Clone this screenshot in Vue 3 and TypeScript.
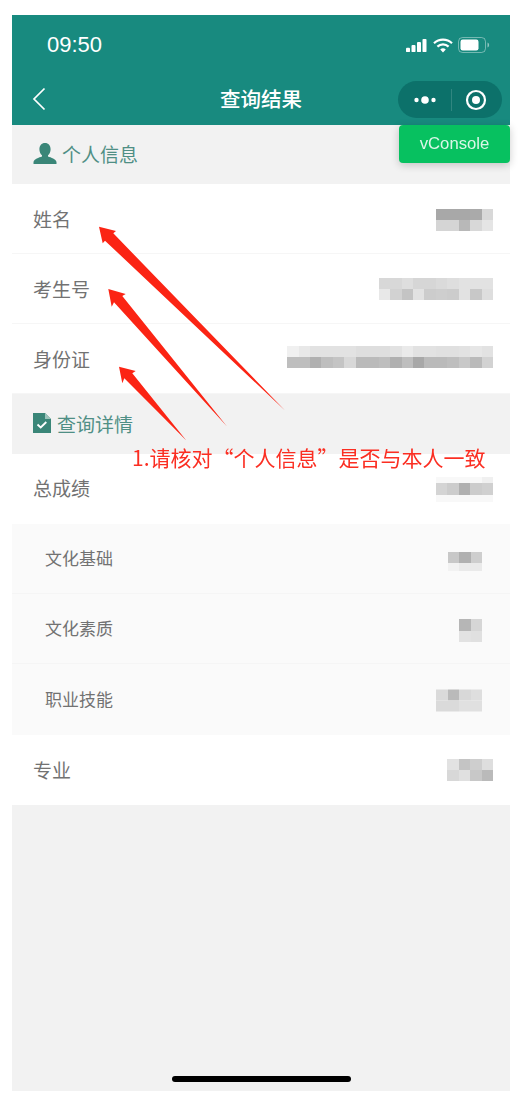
<script setup lang="ts">
interface Row { label: string; cells: number[][]; shift: number; inset: number; heights?: number[] }
const g = (...v: number[]) => v
const person: Row[] = [
  { label: '姓名', inset: 17, shift: 2, cells: [g(168, 168, 168, 170, 216), g(213, 213, 184, 216, 229)] },
  { label: '考生号', inset: 17, shift: 1, cells: [g(216, 216, 222, 214, 214, 218, 222, 226, 226, 226), g(232, 210, 196, 226, 204, 206, 204, 226, 200, 222)] },
  { label: '身份证', inset: 17, shift: -1, cells: [g(240, 232, 226, 226, 226, 226, 222, 222, 222, 226, 234, 226, 226, 224, 224, 226, 230, 226), g(190, 190, 176, 190, 196, 216, 186, 186, 190, 176, 190, 168, 186, 186, 190, 200, 186, 210)] },
]
const total: Row = { label: '总成绩', inset: 17, shift: 2, heights: [6, 12, 7], cells: [g(248, 248, 248, 248, 240), g(212, 204, 176, 204, 208), g(248, 248, 248, 248, 248)] }
const subs: Row[] = [
  { label: '文化基础', inset: 28, shift: 4, heights: [11.4, 7.5], cells: [g(200, 176, 206), g(242, 234, 234)] },
  { label: '文化素质', inset: 28, shift: 3, cells: [g(182, 214), g(226, 224)] },
  { label: '职业技能', inset: 28, shift: 2.5, cells: [g(218, 186, 216, 222), g(218, 218, 224, 224)] },
]
const major: Row = { label: '专业', inset: 17, shift: 1, cells: [g(226, 196, 206, 222), g(216, 224, 200, 186)] }
const grey = (v: number) => ({ backgroundColor: `rgb(${v},${v},${v})` })
const place = (r: Row) => ({ marginRight: r.inset + 'px', transform: `translateY(${r.shift}px)` })
const rowHeight = (r: Row, i: number) => (r.heights ? { height: r.heights[i] + 'px' } : {})
</script>

<template>
  <div class="frame">
    <header class="top">
      <div class="status">
        <span class="time">09:50</span>
        <div class="status-icons">
          <svg width="22" height="13" viewBox="0 0 22 15" preserveAspectRatio="none"><rect x="0" y="10" width="4" height="5" rx="1" /><rect x="5.5" y="7" width="4" height="8" rx="1" /><rect x="11" y="3.5" width="4" height="11.5" rx="1" /><rect x="16.5" y="0" width="4" height="15" rx="1" /></svg>
          <svg width="20" height="15" viewBox="0 0 20 15"><path d="M1 5.2a13 13 0 0 1 18 0" fill="none" stroke="#fff" stroke-width="2.2" /><path d="M4.4 8.6a8.2 8.2 0 0 1 11.2 0" fill="none" stroke="#fff" stroke-width="2.2" /><path d="M7.2 11.5 10 14.5l2.8-3a4 4 0 0 0-5.6 0z" /></svg>
          <svg width="32" height="16" viewBox="0 0 32 16"><rect x=".5" y=".5" width="27" height="15" rx="4" fill="none" stroke="#fff" stroke-opacity=".4" /><rect x="2.5" y="2.500" width="18" height="11" rx="2.200" /><path d="M29.500 5.500c1.200.4 1.600 1.400 1.600 2.500s-.4 2.100-1.600 2.500z" opacity=".5" /></svg>
        </div>
      </div>
      <nav class="nav">
        <svg class="back" width="14" height="24" viewBox="0 0 14 24"><path d="M12.500 1.500 2 12l10.500 10.500" fill="none" stroke="#fff" stroke-width="1.700" /></svg>
        <h1 class="title">查询结果</h1>
        <div class="capsule">
          <svg width="24" height="10" viewBox="0 0 24 10"><circle cx="3.500" cy="5" r="2.200" /><circle cx="12" cy="5" r="3.800" /><circle cx="20.500" cy="5" r="2.200" /></svg>
          <i class="divider"></i>
          <svg width="22" height="22" viewBox="0 0 22 22"><circle cx="11" cy="11" r="9" fill="none" stroke="#fff" stroke-width="2.200" /><circle cx="11" cy="11" r="4" /></svg>
        </div>
      </nav>
    </header>

    <section class="heading heading-person">
      <svg width="24" height="21" viewBox="0 0 24 21"><path d="M12 0c3.500 0 5.600 2.700 5.600 6.200 0 2.600-1 4.700-2.600 6v1.400c3 1.100 8 2.300 8.500 5.500V21H.5v-1.900c.5-3.200 5.500-4.400 8.500-5.500v-1.400c-1.600-1.300-2.600-3.400-2.600-6C6.400 2.700 8.500 0 12 0z" fill="#3a8678" /></svg>
      <span>个人信息</span>
    </section>
    <div v-for="r in person" :key="r.label" class="row line">
      <span>{{ r.label }}</span>
      <div class="mosaic" :style="place(r)">
        <div v-for="(cols, i) in r.cells" :key="i" class="mrow" :style="rowHeight(r, i)">
          <i v-for="(c, j) in cols" :key="j" class="cell" :style="grey(c)"></i>
        </div>
      </div>
    </div>

    <section class="heading heading-detail">
      <svg width="18" height="20" viewBox="0 0 18 20"><path d="M0 0h12l6 6v14H0z" fill="#3a8678" /><path d="M12 0v6h6z" fill="#9cc4bb" /><path d="m4.500 11.500 3.200 3 5.600-5.500" fill="none" stroke="#fff" stroke-width="1.800" /></svg>
      <span>查询详情</span>
    </section>
    <div class="row total">
      <span>{{ total.label }}</span>
      <div class="mosaic" :style="place(total)">
        <div v-for="(cols, i) in total.cells" :key="i" class="mrow" :style="rowHeight(total, i)">
          <i v-for="(c, j) in cols" :key="j" class="cell" :style="grey(c)"></i>
        </div>
      </div>
    </div>
    <div class="subs">
      <div v-for="r in subs" :key="r.label" class="row sub">
        <span>{{ r.label }}</span>
        <div class="mosaic" :style="place(r)">
          <div v-for="(cols, i) in r.cells" :key="i" class="mrow" :style="rowHeight(r, i)">
            <i v-for="(c, j) in cols" :key="j" class="cell" :style="grey(c)"></i>
          </div>
        </div>
      </div>
    </div>
    <div class="row major">
      <span>{{ major.label }}</span>
      <div class="mosaic" :style="place(major)">
        <div v-for="(cols, i) in major.cells" :key="i" class="mrow" :style="rowHeight(major, i)">
          <i v-for="(c, j) in cols" :key="j" class="cell" :style="grey(c)"></i>
        </div>
      </div>
    </div>
    <div class="rest"></div>

    <div class="vconsole">vConsole</div>
    <i class="home"></i>
  </div>

  <svg class="arrows" width="527" height="1107" viewBox="0 0 527 1107">
    <path d="M99 226.700 116 231 113.300 233.300 285 410.500 105 240.700 102.700 243.300z" />
    <path d="M108.300 289 125.700 294 122.300 296 227 426.500 114 302.300 111.700 306.700z" />
    <path d="M119 366.700 135.700 371 132.300 373.300 186.300 440.500 124.300 378.300 122.300 383.300z" />
  </svg>
  <p class="note">1.请核对“个人信息”是否与本人一致</p>
</template>

<style scoped>
.frame {
  position: relative;
  box-sizing: border-box;
  width: 498px;
  height: 1076px;
  margin: 15px 0 16px 12px;
  display: flex;
  flex-direction: column;
  background: #f2f2f2;
  font-family: "Noto Sans CJK SC", "Noto Sans", sans-serif;
  color: #666;
  filter: blur(0.55px);
}
.top { height: 110px; flex: none; background: #188a7f; color: #fff; fill: #fff; }
.status {
  height: 62px;
  padding: 0 20px 2px 35px;
  box-sizing: border-box;
  display: flex;
  align-items: center;
  justify-content: space-between;
}
.time { font: 400 22px "Liberation Sans", sans-serif; }
.status-icons { display: flex; align-items: center; gap: 5px; }
.nav { position: relative; height: 48px; display: flex; align-items: center; justify-content: center; padding-bottom: 6px; box-sizing: border-box; }
.back { position: absolute; left: 20px; top: 10px; }
.title { margin: 0; font-size: 20.500px; font-weight: 500; line-height: 1; }
.capsule {
  position: absolute;
  left: 386px;
  top: 4px;
  box-sizing: border-box;
  width: 104px;
  height: 37px;
  border-radius: 19px;
  background: #0c716a;
  display: flex;
  align-items: center;
  padding: 0 15px 0 15px;
  justify-content: space-between;
}
.divider { width: 1px; height: 22px; background: rgba(255, 255, 255, 0.15); }
.heading {
  flex: none;
  box-sizing: border-box;
  display: flex;
  align-items: center;
  color: #4f8f85;
  font-size: 19px;
}
.heading-person { height: 59px; padding: 0 0 2px 21px; gap: 5px; }
.heading-detail { height: 60px; padding: 0 0 2px 21px; gap: 6px; }
.row {
  height: 70px;
  flex: none;
  box-sizing: border-box;
  background: #fff;
  display: flex;
  align-items: center;
  justify-content: space-between;
  padding-left: 21px;
  font-size: 19px;
  color: #727272;
}
.line { padding-bottom: 1px; border-bottom: 1px solid #f6f6f6; }
.line:nth-of-type(4) { border-bottom: 0; padding-bottom: 0; }
.total { padding-bottom: 4px; }
.major { padding-bottom: 2px; }
.subs { background: #fafafa; flex: none; padding-bottom: 1px; }
.sub { height: 70px; background: transparent; padding: 0 0 2px 33px; font-size: 17px; border-bottom: 1px solid #f5f5f5; }
.sub:last-child { border-bottom: 0; }
.mosaic { display: flex; flex-direction: column; }
.mrow { display: flex; justify-content: flex-end; }
.cell { display: block; width: 11.450px; height: 100%; min-height: 5px; }
.mrow:not([style*="height"]) { height: 11.400px; }
.rest { flex: 1; }
.vconsole {
  position: absolute;
  right: 0;
  top: 110px;
  width: 111px;
  height: 38px;
  background: #07c160;
  border-radius: 4px;
  box-shadow: 0 2px 8px rgba(0, 0, 0, 0.2);
  color: rgba(255, 255, 255, 0.85);
  font: 400 16.700px/38px "Liberation Sans", sans-serif;
  text-align: center;
}
.home {
  position: absolute;
  left: 160px;
  bottom: 9px;
  width: 179px;
  height: 6px;
  border-radius: 3px;
  background: #000;
}
.arrows { position: absolute; left: 0; top: 0; fill: #fb2414; pointer-events: none; }
.note {
  position: absolute;
  left: 132px;
  top: 442px;
  margin: 0;
  font: 400 21px/30px "Noto Sans CJK SC", sans-serif;
  color: #fb2e22;
  white-space: nowrap;
}
</style>

<style>
html, body { background: #fff; }
</style>
